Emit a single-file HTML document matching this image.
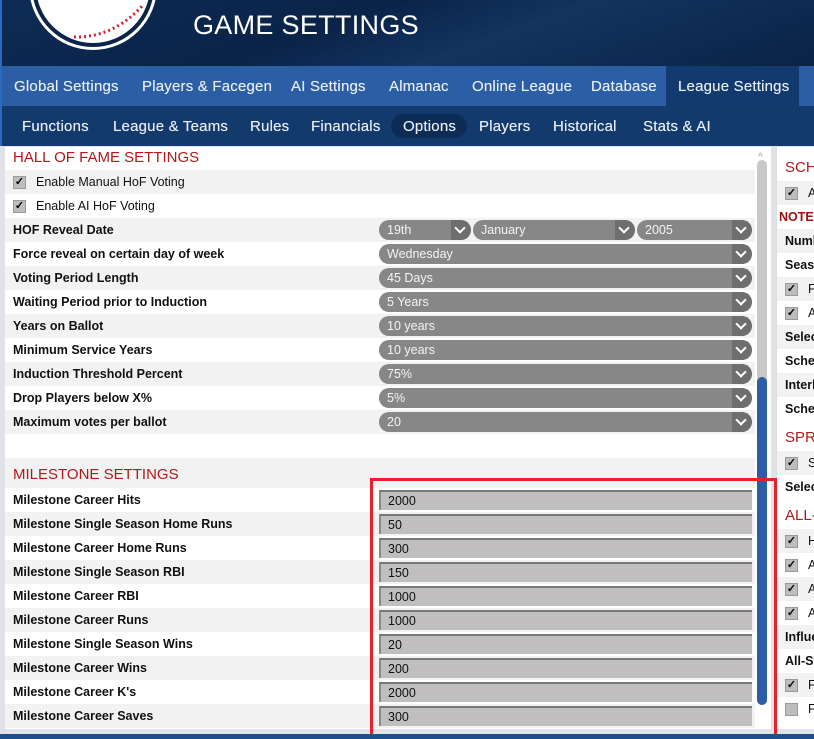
<!DOCTYPE html>
<html><head><meta charset="utf-8"><style>
*{box-sizing:border-box;margin:0;padding:0}
body{width:814px;height:739px;overflow:hidden;background:#dfe3e8;font-family:"Liberation Sans",Arial,sans-serif;position:relative}
.hdr{position:absolute;left:0;top:0;width:814px;height:66px;background:linear-gradient(160deg,#0d2c55 0%,#0a2348 40%,#12345f 60%,#0a2245 100%);border-left:2px solid #2a6ac0}
.title{position:absolute;left:191px;top:10px;color:#fff;font-size:27px;letter-spacing:0.3px}
.nav1{position:absolute;left:0;top:66px;width:814px;height:40px;background:#2b5ea5;border-left:2px solid #2a6ac0}
.nav1 span,.nav2 span{position:absolute;color:#e6ecf4;font-size:15px;top:12px;letter-spacing:0.2px;text-shadow:0 0 0.4px #e6ecf4}
.nav1 .act{position:absolute;left:664px;top:0;width:133px;height:40px;background:#123a6e}
.nav2{position:absolute;left:0;top:106px;width:814px;height:40px;background:#133a6d;border-left:2px solid #2a6ac0}
.pill{position:absolute;left:389px;top:8px;width:76px;height:24px;border-radius:12px;background:#0d2c55}
.panel{position:absolute;left:5px;top:147px;width:766px;height:582px;background:#fff}
.row,.rr{position:absolute;left:0;height:24px;font-size:12.5px;font-weight:bold;color:#111;padding-left:8px;display:flex;align-items:center;white-space:nowrap}
.row{width:750px}
.rr{width:38px;overflow:hidden}
.g{background:#f2f2f2}
.sec{position:absolute;left:8px;font-size:15px;color:#b01a1a}
.cb{display:inline-block;width:13px;height:13px;background:#bdbdbd;border:1px solid #9a9a9a;margin-right:10px;font-size:11px;line-height:11px;text-align:center;color:#000;font-weight:bold;flex:none}
.nb{font-weight:normal}
.sel{position:absolute;height:20px;background:#878787;border-radius:10px;color:#f4f4f4;font-size:12.5px;font-weight:normal;padding:3px 0 0 8px;overflow:hidden}
.sel i{position:absolute;right:0;top:0;width:20px;height:20px;background:#6e6e6e;border-radius:0 10px 10px 0}
.sel i:after{content:"";position:absolute;left:5px;top:4px;width:6px;height:6px;border-right:2px solid #fff;border-bottom:2px solid #fff;transform:rotate(45deg)}
.inp{position:absolute;left:374px;width:373px;height:20px;background:#c0bebe;border-top:2px solid #777;border-left:2px solid #8a8a8a;font-size:12.5px;font-weight:normal;color:#111;padding:2px 0 0 7px}
.sb{position:absolute;left:757px;top:160px;width:10px;height:545px;background:#c8c8c8;border-radius:5px}
.thumb{position:absolute;left:757px;top:377px;width:10px;height:328px;background:#2b5ea5;border-radius:5px}
.right{position:absolute;left:776px;top:147px;width:38px;height:582px;background:#fff;border-left:1px solid #ddd}
.red{position:absolute;left:370px;top:478px;width:407px;height:259px;border:3px solid #e8202a}
.bot{position:absolute;left:0;top:734px;width:814px;height:5px;background:#1d4f8c}
</style></head><body>
<div class="hdr">
<svg width="190" height="66" style="position:absolute;left:0;top:0">
<circle cx="91" cy="-14" r="64" fill="#fff"/>
<circle cx="91" cy="-14" r="59" fill="#fff" stroke="#0b2447" stroke-width="4"/>
<path d="M72 37 Q112 38 142 4" fill="none" stroke="#d42030" stroke-width="3" stroke-dasharray="2 3"/>
</svg>
<div class="title">GAME SETTINGS</div>
</div>
<div class="nav1"><div class="act"></div>
<span style="left:12px">Global Settings</span><span style="left:140px">Players &amp; Facegen</span><span style="left:289px">AI Settings</span><span style="left:387px">Almanac</span><span style="left:470px">Online League</span><span style="left:589px">Database</span><span style="left:676px">League Settings</span></div>
<div class="nav2"><div class="pill"></div>
<span style="left:20px">Functions</span><span style="left:111px">League &amp; Teams</span><span style="left:248px">Rules</span><span style="left:309px">Financials</span><span style="left:401px">Options</span><span style="left:477px">Players</span><span style="left:551px">Historical</span><span style="left:641px">Stats &amp; AI</span></div>

<div class="panel">
<div class="sec" style="top:2px">HALL OF FAME SETTINGS</div>
<div class="row g nb" style="top:23px"><span class="cb">✓</span>Enable Manual HoF Voting</div>
<div class="row nb" style="top:47px"><span class="cb">✓</span>Enable AI HoF Voting</div>
<div class="row g" style="top:71px">HOF Reveal Date
<div class="sel" style="left:374px;top:2px;width:92px">19th<i></i></div>
<div class="sel" style="left:468px;top:2px;width:162px">January<i></i></div>
<div class="sel" style="left:632px;top:2px;width:115px">2005<i></i></div></div>
<div class="row" style="top:95px">Force reveal on certain day of week<div class="sel" style="left:374px;top:2px;width:373px">Wednesday<i></i></div></div>
<div class="row g" style="top:119px">Voting Period Length<div class="sel" style="left:374px;top:2px;width:373px">45 Days<i></i></div></div>
<div class="row" style="top:143px">Waiting Period prior to Induction<div class="sel" style="left:374px;top:2px;width:373px">5 Years<i></i></div></div>
<div class="row g" style="top:167px">Years on Ballot<div class="sel" style="left:374px;top:2px;width:373px">10 years<i></i></div></div>
<div class="row" style="top:191px">Minimum Service Years<div class="sel" style="left:374px;top:2px;width:373px">10 years<i></i></div></div>
<div class="row g" style="top:215px">Induction Threshold Percent<div class="sel" style="left:374px;top:2px;width:373px">75%<i></i></div></div>
<div class="row" style="top:239px">Drop Players below X%<div class="sel" style="left:374px;top:2px;width:373px">5%<i></i></div></div>
<div class="row g" style="top:263px">Maximum votes per ballot<div class="sel" style="left:374px;top:2px;width:373px">20<i></i></div></div>
<div class="row g" style="top:311px;height:30px"></div>
<div class="sec" style="top:319px">MILESTONE SETTINGS</div>
<div class="row" style="top:341px">Milestone Career Hits<div class="inp" style="top:2px">2000</div></div>
<div class="row g" style="top:365px">Milestone Single Season Home Runs<div class="inp" style="top:2px">50</div></div>
<div class="row" style="top:389px">Milestone Career Home Runs<div class="inp" style="top:2px">300</div></div>
<div class="row g" style="top:413px">Milestone Single Season RBI<div class="inp" style="top:2px">150</div></div>
<div class="row" style="top:437px">Milestone Career RBI<div class="inp" style="top:2px">1000</div></div>
<div class="row g" style="top:461px">Milestone Career Runs<div class="inp" style="top:2px">1000</div></div>
<div class="row" style="top:485px">Milestone Single Season Wins<div class="inp" style="top:2px">20</div></div>
<div class="row g" style="top:509px">Milestone Career Wins<div class="inp" style="top:2px">200</div></div>
<div class="row" style="top:533px">Milestone Career K's<div class="inp" style="top:2px">2000</div></div>
<div class="row g" style="top:557px">Milestone Career Saves<div class="inp" style="top:2px">300</div></div>
</div>
<div class="sb"></div><div class="thumb"></div>
<div style="position:absolute;left:758px;top:152px;color:#999;font-size:10px">^</div>

<div class="right">
<div class="sec" style="top:12px;left:8px">SCH</div>
<div class="rr g nb" style="top:34px"><span class="cb">✓</span>A</div>
<div class="rr" style="top:58px;color:#a01010;padding-left:2px">NOTE:</div>
<div class="rr g" style="top:82px">Numb</div>
<div class="rr" style="top:106px">Seas</div>
<div class="rr g nb" style="top:130px"><span class="cb">✓</span>F</div>
<div class="rr nb" style="top:154px"><span class="cb">✓</span>A</div>
<div class="rr g" style="top:178px">Selec</div>
<div class="rr" style="top:202px">Sche</div>
<div class="rr g" style="top:226px">Interl</div>
<div class="rr" style="top:250px">Sche</div>
<div class="sec" style="top:282px;left:8px">SPRI</div>
<div class="rr g nb" style="top:304px"><span class="cb">✓</span>S</div>
<div class="rr" style="top:328px">Selec</div>
<div class="sec" style="top:360px;left:8px">ALL-</div>
<div class="rr g nb" style="top:382px"><span class="cb">✓</span>H</div>
<div class="rr nb" style="top:406px"><span class="cb">✓</span>A</div>
<div class="rr g nb" style="top:430px"><span class="cb">✓</span>A</div>
<div class="rr nb" style="top:454px"><span class="cb">✓</span>A</div>
<div class="rr g" style="top:478px">Influe</div>
<div class="rr" style="top:502px">All-St</div>
<div class="rr g nb" style="top:526px"><span class="cb">✓</span>F</div>
<div class="rr nb" style="top:550px"><span class="cb"></span>F</div>
</div>
<div class="red"></div>
<div class="bot"></div>
</body></html>
